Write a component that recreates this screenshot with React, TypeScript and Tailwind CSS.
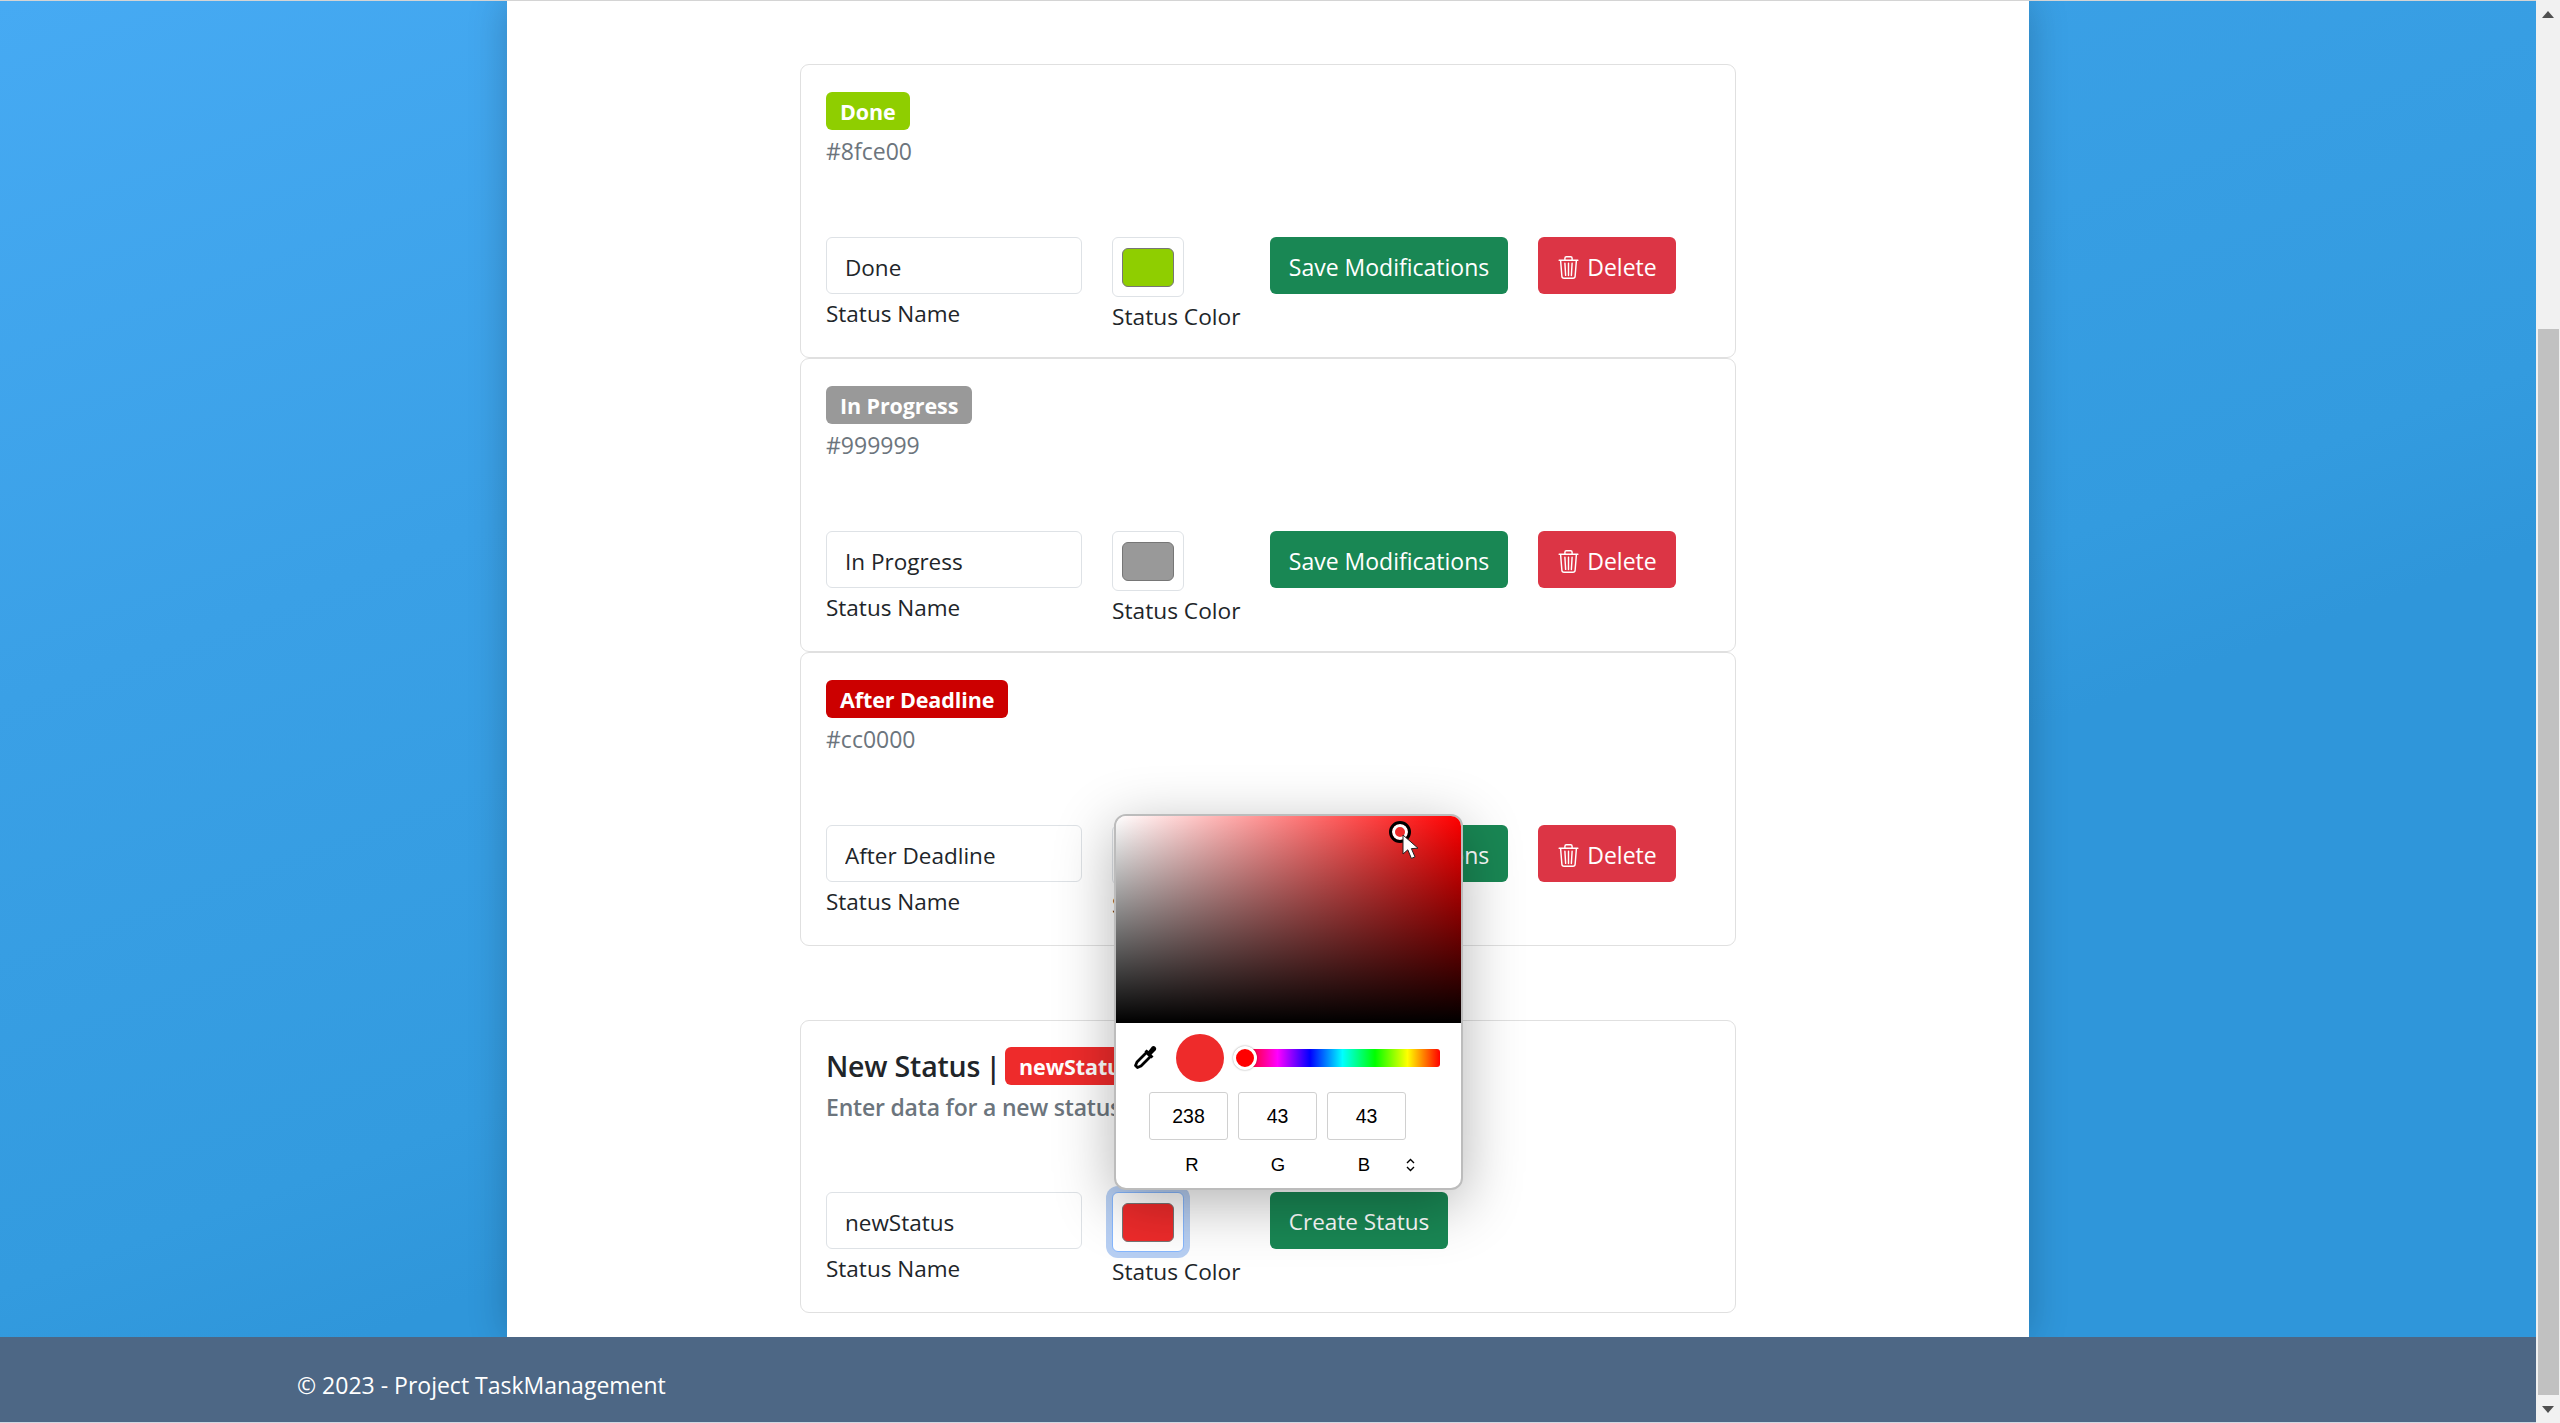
import React from 'react';
import { BsTrash3 } from 'react-icons/bs';

const statuses = [
  { name: 'Done', color: '#8fce00' },
  { name: 'In Progress', color: '#999999' },
  { name: 'After Deadline', color: '#cc0000' },
];

const Badge = ({ label, color }: { label: string; color: string }) => (
  <span
    className="inline-flex h-[38px] items-center rounded-[6px] px-[14px] pt-[2px] text-[21.5px] font-bold tracking-[-0.1px] whitespace-nowrap text-white"
    style={{ backgroundColor: color }}
  >
    {label}
  </span>
);

const NameField = ({ value }: { value: string }) => (
  <div className="w-[256px] shrink-0">
    <input
      readOnly
      value={value}
      className="h-[57px] w-full rounded-[6px] border border-[#dee2e6] bg-white px-[18px] pt-[3px] text-[22.5px] text-[#212529] outline-none"
    />
    <div className="mt-[4px] text-[22.5px] leading-[32px] text-[#212529]">Status Name</div>
  </div>
);

const ColorField = ({ color, focused = false }: { color: string; focused?: boolean }) => (
  <div className="w-[128px] shrink-0">
    <div
      className={`flex h-[60px] w-[72px] items-center justify-center rounded-[6px] border pr-[1px] ${
        focused ? 'border-[#86b7fe] shadow-[0_0_0_6px_#b7cff3]' : 'border-[#dee2e6]'
      } bg-white`}
    >
      <div className="h-[39px] w-[52px] rounded-[6px] border border-[#767676]" style={{ backgroundColor: color }} />
    </div>
    <div className="mt-[4px] text-[22.7px] leading-[32px] whitespace-nowrap text-[#212529]">Status Color</div>
  </div>
);

const StatusCard = ({ name, color }: { name: string; color: string }) => (
  <div className="h-[294px] rounded-[9px] border border-[#e0e0e0] bg-white pt-[27px] pl-[25px]">
    <Badge label={name} color={color} />
    <div className="mt-[3px] text-[23px] leading-[36px] text-[#6c757d]">{color}</div>
    <div className="mt-[68px] flex gap-[30px]">
      <NameField value={name} />
      <ColorField color={color} />
      <button className="h-[57px] w-[238px] rounded-[6px] bg-[#198754] pt-[3px] text-[23px] text-white">Save Modifications</button>
      <button className="flex h-[57px] w-[138px] items-center justify-center gap-[7px] rounded-[6px] bg-[#dc3545] pt-[3px] text-[23px] text-white">
        <BsTrash3 size={23} />
        <span>Delete</span>
      </button>
    </div>
  </div>
);

const ColorPopup = () => (
  <div className="absolute top-[814px] left-[1114px] z-10 w-[349px] rounded-[12px] border-2 border-[#bcbcbc] bg-white font-['Liberation_Sans',sans-serif] text-black shadow-[0_14px_60px_rgba(0,0,0,0.3)]">
    <div className="relative h-[207px] rounded-t-[10px] bg-[linear-gradient(to_top,#000,transparent),linear-gradient(to_right,#fff,#f00)]">
      <div className="absolute top-[5px] left-[273px] h-[22px] w-[22px] rounded-full border-[3px] border-black bg-[#ee2b2b] shadow-[inset_0_0_0_3px_#fff]" />
      <svg className="absolute top-[18px] left-[286px]" width="19" height="26" viewBox="0 0 19 26">
        <path d="M1 1 L1 20 L5.8 15.8 L9.4 24.4 L13 22.9 L9.4 14.6 L16 14.2 Z" fill="#fff" stroke="#222" strokeWidth="1" />
      </svg>
    </div>
    <div className="flex h-[69px] items-center pl-[17px]">
      <svg className="mr-[18px] shrink-0" width="25" height="25" viewBox="0 0 25 25">
        <path d="M13.5 7.5 L17.5 11.5 L8 21 L4.5 22.5 L2.5 20.5 L4 17 Z" fill="#fff" stroke="#000" strokeWidth="2.8" strokeLinejoin="round" />
        <path d="M11.5 6.5 L18.5 13.5 L20.5 11.5 L18.5 9.5 L23 5 A2.8 2.8 0 0 0 19 1.5 L15.5 6 L13.5 4.5 Z" fill="#000" />
      </svg>
      <div className="h-[48px] w-[48px] shrink-0 rounded-full bg-[#ee2b2b]" />
      <div className="relative ml-[21px] h-[18px] w-[195px] rounded-r-[3px] bg-[linear-gradient(to_right,#f00,#f0f,#00f,#0ff,#0f0,#ff0,#f00)]">
        <div className="absolute top-[-3px] left-[-12px] h-[24px] w-[24px] rounded-full border-[3px] border-white bg-[#f00] shadow-[0_0_2px_rgba(0,0,0,0.4)]" />
      </div>
    </div>
    <div className="flex gap-[10px] pl-[33px]">
      {['238', '43', '43'].map((v, i) => (
        <input
          key={i}
          readOnly
          value={v}
          className="h-[48px] w-[79px] rounded-[3px] border border-[#d0d0d0] bg-white text-center text-[19.5px] outline-none"
        />
      ))}
    </div>
    <div className="flex h-[48px] items-center pt-[1px] pl-[33px] text-[18.5px]">
      <span className="w-[86px] text-center">R</span>
      <span className="w-[86px] text-center">G</span>
      <span className="w-[86px] text-center">B</span>
      <svg className="ml-[-1px]" width="9" height="14" viewBox="0 0 9 14" fill="none" stroke="#000" strokeWidth="1.4">
        <path d="M1 5 L4.5 1.5 L8 5 M1 9 L4.5 12.5 L8 9" />
      </svg>
    </div>
  </div>
);

export default function App() {
  return (
    <div className="relative flex h-[1423px] overflow-hidden font-['Open_Sans',sans-serif] text-[#212529]">
      <div className="flex min-w-0 flex-1 flex-col">
        <main className="flex min-h-0 flex-1 justify-center overflow-hidden border-t border-[#d4d4d4] bg-[linear-gradient(160deg,#46aaf3_0%,#3aa0e6_31%,#339bdf_57%,#2f96da_65%)]">
          <div className="w-[1522px] bg-white pt-[63px] shadow-[0_0_36px_rgba(0,0,0,0.22)]">
            <div className="mx-auto flex w-[936px] flex-col">
              {statuses.map((s) => (
                <StatusCard key={s.name} name={s.name} color={s.color} />
              ))}
              <div className="mt-[74px] h-[293px] rounded-[9px] border border-[#e0e0e0] pt-[25px] pl-[25px]">
                <div className="flex h-[40px] items-center">
                  <span className="text-[28.5px] leading-none font-semibold tracking-[-0.2px] text-[#212529]">New Status</span>
                  <span className="ml-[5px] text-[29px] leading-none font-semibold">|</span>
                  <span className="ml-[4px]">
                    <Badge label="newStatus" color="#ee2b2b" />
                  </span>
                </div>
                <div className="mt-[4px] text-[23px] leading-[34px] font-semibold tracking-[-0.2px] whitespace-nowrap text-[#6c757d]">Enter data for a new status</div>
                <div className="mt-[68px] flex gap-[30px]">
                  <NameField value="newStatus" />
                  <ColorField color="#ee2b2b" focused />
                  <button className="h-[57px] w-[178px] rounded-[6px] bg-[#198754] pt-[3px] text-[22.5px] text-white">Create Status</button>
                </div>
              </div>
            </div>
          </div>
        </main>
        <footer className="flex h-[86px] shrink-0 items-center border-b border-[#cfd8e3] bg-[#4d6785] pt-[12px] pl-[297px] text-[23px] text-white">
          © 2023 - Project TaskManagement
        </footer>
      </div>

      <div className="flex w-6 shrink-0 flex-col items-center bg-[#f1f1f1]">
        <svg className="mt-[11px]" width="12" height="7" viewBox="0 0 12 7">
          <path d="M6 0 L12 7 L0 7 Z" fill="#505050" />
        </svg>
        <div className="mt-[311px] ml-[1px] h-[1066px] w-[21px] bg-[#c1c1c1]" />
        <svg className="mt-[11px]" width="12" height="7" viewBox="0 0 12 7">
          <path d="M0 0 L12 0 L6 7 Z" fill="#505050" />
        </svg>
      </div>

      <ColorPopup />
    </div>
  );
}
